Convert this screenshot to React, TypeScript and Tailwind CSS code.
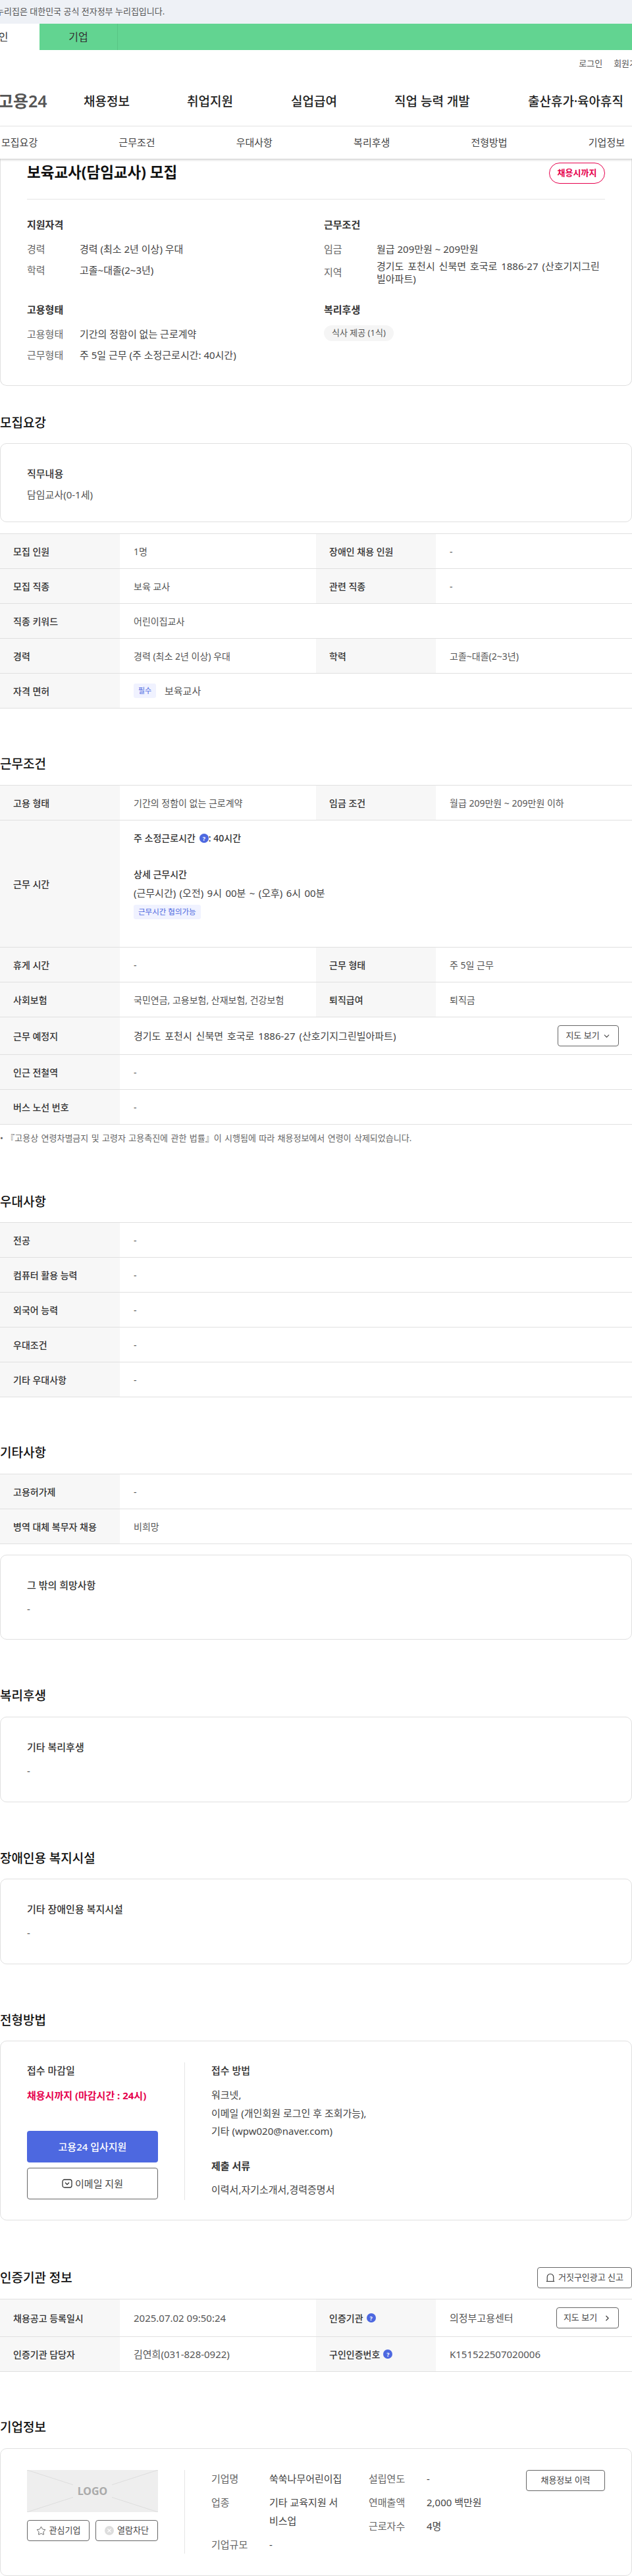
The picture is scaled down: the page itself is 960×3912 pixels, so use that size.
import React from "react";
import { ChevronDown, ChevronRight, Star } from "lucide-react";

function Help() {
  return (
    <span className="inline-flex items-center justify-center rounded-full bg-[#4d68e0] text-white font-bold text-[9px] leading-none w-[14px] h-[14px]">
      ?
    </span>
  );
}

function Heading({ children }: { children: React.ReactNode }) {
  return <h2 className="text-[19px] leading-[30px] font-medium text-[#111]">{children}</h2>;
}

function Label({ children }: { children: React.ReactNode }) {
  return (
    <div className="w-[182px] shrink-0 bg-[#f7f7f7] pl-5 pr-2 flex items-center font-medium text-[#333]">
      {children}
    </div>
  );
}

function Value({ children, wide }: { children: React.ReactNode; wide?: boolean }) {
  return (
    <div className={`${wide ? "flex-1" : "w-[298px] shrink-0"} pl-[21px] pr-2 flex items-center text-[#555]`}>
      {children}
    </div>
  );
}

function Row({ cells, size = "text-[14px]" }: { cells: [React.ReactNode, React.ReactNode][]; size?: string }) {
  return (
    <div className={`flex border-b border-[#e0e0e0] h-[53px] text-[14px]`}>
      {cells.map(([l, v], i) => (
        <React.Fragment key={i}>
          <Label>{l}</Label>
          <Value wide={cells.length === 1 || i === 1}>
            <span className={size}>{v}</span>
          </Value>
        </React.Fragment>
      ))}
    </div>
  );
}

function BoxCard({ title, value, className, gap = "mt-3" }: { title: string; value: string; className: string; gap?: string }) {
  return (
    <div className={`rounded-[10px] border border-[#e0e0e0] px-10 pt-[33px] ${className}`}>
      <p className="font-medium text-[#333] leading-[24px]">{title}</p>
      <p className={`${gap} text-[#555] leading-[24px]`}>{value}</p>
    </div>
  );
}

function OutlineBtn({ children, className }: { children: React.ReactNode; className: string }) {
  return (
    <button className={`flex items-center justify-center rounded-[4px] border border-[#666] bg-white text-[#444] ${className}`}>
      {children}
    </button>
  );
}

export default function App() {
  return (
    <div className="w-[960px] overflow-hidden bg-white font-['Noto_Sans','Noto_Sans_CJK_KR',sans-serif] text-[15px] text-[#333]">
      {/* top banner */}
      <div className="h-9 bg-[#eef1f6] flex items-center text-[13px] text-[#555]">
        <span className="-ml-[6px]">누리집은 대한민국 공식 전자정부 누리집입니다.</span>
      </div>
      <div className="h-10 bg-[#62d491] flex text-[#333] text-[16px]">
        <div className="w-[60px] bg-white flex items-center">
          <span className="-ml-[17px]">개인</span>
        </div>
        <div className="w-[119px] border-r border-[#58c585] flex items-center justify-center">기업</div>
      </div>

      {/* header */}
      <div className="h-[116px] border-b border-[#e5e5e5]">
        <div className="flex justify-end gap-[17px] pt-[10px] -mr-[20px] text-[13px] leading-5 text-[#555]">
          <span>로그인</span>
          <span>회원가입</span>
        </div>
        <div className="flex items-center mt-[28px] h-10 text-[19px] font-medium text-[#222]">
          <span className="-ml-[3px] w-[130px] text-[25px] font-semibold text-[#555]">고용24</span>
          <span className="w-[157px]">채용정보</span>
          <span className="w-[158px]">취업지원</span>
          <span className="w-[157px]">실업급여</span>
          <span className="w-[203px]">직업 능력 개발</span>
          <span>출산휴가·육아휴직</span>
        </div>
      </div>
      <div className="h-[49px] flex items-center justify-between pl-[2px] pr-[11px] relative z-10 shadow-[0_2px_3px_rgba(0,0,0,0.18)] bg-white text-[#444]">
        {["모집요강", "근무조건", "우대사항", "복리후생", "전형방법", "기업정보"].map((t) => (
          <span key={t}>{t}</span>
        ))}
      </div>

      {/* summary card */}
      <div className="h-[345px] border border-t-0 border-[#e0e0e0] rounded-b-[10px] px-10">
        <div className="h-[62px] border-b border-[#e5e5e5] flex justify-between">
          <h1 className="mt-[4px] text-[22.5px] leading-[34px] font-bold text-[#111]">보육교사(담임교사) 모집</h1>
          <span className="mt-[6px] w-[85px] h-[32px] rounded-full border border-[#e6004d] text-[#e6004d] text-[13px] font-bold flex items-center justify-center">채용시까지</span>
        </div>
        <div className="grid grid-cols-[451px_1fr] mt-[26px] text-[#444]">
          <div>
            <h3 className="font-bold leading-6 text-[#333]">지원자격</h3>
            <div className="mt-[13px] flex h-[24px] items-center"><span className="w-20 text-[#666]">경력</span><span>경력 (최소 2년 이상) 우대</span></div>
            <div className="mt-[8px] flex h-[24px] items-center"><span className="w-20 text-[#666]">학력</span><span>고졸~대졸(2~3년)</span></div>
          </div>
          <div>
            <h3 className="font-bold leading-6 text-[#333]">근무조건</h3>
            <div className="mt-[13px] flex h-[24px] items-center"><span className="w-20 text-[#666]">임금</span><span>월급 209만원 ~ 209만원</span></div>
            <div className="mt-[3px] flex items-center"><span className="w-20 shrink-0 text-[#666]">지역</span><span className="leading-[19px] pt-[2px] w-[340px] break-all [word-spacing:2px]">경기도 포천시 신북면 호국로 1886-27 (산호기지그린빌아파트)</span></div>
          </div>
          <div className="mt-[25px]">
            <h3 className="font-bold leading-6 text-[#333]">고용형태</h3>
            <div className="mt-[13px] flex h-[24px] items-center"><span className="w-20 text-[#666]">고용형태</span><span>기간의 정함이 없는 근로계약</span></div>
            <div className="mt-[8px] flex h-[24px] items-center"><span className="w-20 text-[#666]">근무형태</span><span>주 5일 근무 (주 소정근로시간: 40시간)</span></div>
          </div>
          <div className="mt-[25px]">
            <h3 className="font-bold leading-6 text-[#333]">복리후생</h3>
            <span className="mt-[12px] flex w-fit h-6 items-center px-3 rounded-full bg-[#f5f5f5] text-[13px] text-[#555]">식사 제공 (1식)</span>
          </div>
        </div>
      </div>

      {/* 모집요강 */}
      <div className="mt-[41px]"><Heading>모집요강</Heading></div>
      <BoxCard title="직무내용" value="담임교사(0-1세)" gap="mt-2" className="mt-4 h-[120px]" />
      <div className="mt-[17px] border-t border-[#e0e0e0]">
        <Row cells={[["모집 인원", "1명"], ["장애인 채용 인원", "-"]]} />
        <Row cells={[["모집 직종", "보육 교사"], ["관련 직종", "-"]]} />
        <Row cells={[["직종 키워드", "어린이집교사"]]} />
        <Row cells={[["경력", "경력 (최소 2년 이상) 우대"], ["학력", "고졸~대졸(2~3년)"]]} />
        <Row
          size="text-[15px]"
          cells={[[
            "자격 면허",
            <span className="flex items-center" key="a">
              <span className="w-[34px] h-[22px] mr-[13px] flex items-center justify-center rounded-[3px] bg-[#f0f2ff] text-[#4d68e0] text-[11px]">필수</span>
              보육교사
            </span>,
          ]]}
        />
      </div>

      {/* 근무조건 */}
      <div className="mt-[69px]"><Heading>근무조건</Heading></div>
      <div className="mt-[17px] border-t border-[#e0e0e0]">
        <Row cells={[["고용 형태", "기간의 정함이 없는 근로계약"], ["임금 조건", "월급 209만원 ~ 209만원 이하"]]} />
        <div className="flex border-b border-[#e0e0e0] h-[193px] text-[14px]">
          <Label>근무 시간</Label>
          <div className="flex-1 pl-[21px] pt-[15px] text-[#333]">
            <p className="font-medium leading-6 flex items-center gap-[6px]">주 소정근로시간 <span className="flex items-center"><Help />: 40시간</span></p>
            <p className="mt-[31px] font-medium leading-6">상세 근무시간</p>
            <p className="mt-1 leading-6 text-[15px] [word-spacing:1.5px] text-[#444]">(근무시간) (오전) 9시 00분 ~ (오후) 6시 00분</p>
            <span className="mt-[6px] flex w-fit h-[22px] items-center px-[7px] rounded-[3px] bg-[#f0f2ff] text-[#4d68e0] text-[11.5px]">근무시간 협의가능</span>
          </div>
        </div>
        <Row cells={[["휴게 시간", "-"], ["근무 형태", "주 5일 근무"]]} />
        <Row cells={[["사회보험", "국민연금, 고용보험, 산재보험, 건강보험"], ["퇴직급여", "퇴직금"]]} />
        <div className="flex border-b border-[#e0e0e0] h-[57px] text-[14px]">
          <Label>근무 예정지</Label>
          <div className="flex-1 pl-[21px] pr-5 flex items-center justify-between text-[15px] text-[#444]">
            <span className="[word-spacing:2px]">경기도 포천시 신북면 호국로 1886-27 (산호기지그린빌아파트)</span>
            <OutlineBtn className="w-[93px] h-[32px] text-[13px] gap-1">지도 보기 <ChevronDown size={13} /></OutlineBtn>
          </div>
        </div>
        <Row cells={[["인근 전철역", "-"]]} />
        <Row cells={[["버스 노선 번호", "-"]]} />
      </div>
      <p className="mt-[10px] text-[13px] leading-5 [word-spacing:1px] text-[#666]">• 『고용상 연령차별금지 및 고령자 고용촉진에 관한 법률』이 시행됨에 따라 채용정보에서 연령이 삭제되었습니다.</p>

      {/* 우대사항 */}
      <div className="mt-[72px]"><Heading>우대사항</Heading></div>
      <div className="mt-4 border-t border-[#e0e0e0]">
        <Row cells={[["전공", "-"]]} />
        <Row cells={[["컴퓨터 활용 능력", "-"]]} />
        <Row cells={[["외국어 능력", "-"]]} />
        <Row cells={[["우대조건", "-"]]} />
        <Row cells={[["기타 우대사항", "-"]]} />
      </div>

      {/* 기타사항 */}
      <div className="mt-[69px]"><Heading>기타사항</Heading></div>
      <div className="mt-[17px] border-t border-[#e0e0e0]">
        <Row cells={[["고용허가제", "-"]]} />
        <Row cells={[["병역 대체 복무자 채용", "비희망"]]} />
      </div>
      <BoxCard title="그 밖의 희망사항" value="-" className="mt-4 h-[129px]" />

      {/* 복리후생 */}
      <div className="mt-[70px]"><Heading>복리후생</Heading></div>
      <BoxCard title="기타 복리후생" value="-" className="mt-[17px] h-[130px]" />

      {/* 장애인용 복지시설 */}
      <div className="mt-[70px]"><Heading>장애인용 복지시설</Heading></div>
      <BoxCard title="기타 장애인용 복지시설" value="-" className="mt-4 h-[130px]" />

      {/* 전형방법 */}
      <div className="mt-[70px]"><Heading>전형방법</Heading></div>
      <div className="mt-4 h-[273px] rounded-[10px] border border-[#e0e0e0] px-10 pt-8 flex">
        <div className="w-[199px] shrink-0">
          <p className="font-medium leading-6">접수 마감일</p>
          <p className="mt-[14px] font-bold leading-6 text-[#e6004d] whitespace-nowrap">채용시까지 (마감시간 : 24시)</p>
          <button className="mt-[42px] block w-full h-12 rounded-[4px] bg-[#4d68e0] text-white text-[15px] font-medium">고용24 입사지원</button>
          <OutlineBtn className="mt-2 w-full h-12 gap-1 text-[15px]">
            <svg width="16" height="16" viewBox="0 0 16 16" fill="none" stroke="#333" strokeWidth="1.3">
              <rect x="1" y="2" width="14" height="12" rx="3" />
              <path d="M5 6.5 8 9.5 11 6.5" />
            </svg>
            이메일 지원
          </OutlineBtn>
        </div>
        <div className="ml-10 border-l border-[#e5e5e5] pl-10 h-[209px] flex-1">
          <p className="font-medium leading-6">접수 방법</p>
          <div className="mt-3 leading-[27.5px] text-[#444]">
            <p>워크넷,</p>
            <p>이메일 (개인회원 로그인 후 조회가능),</p>
            <p>기타 (wpw020@naver.com)</p>
          </div>
          <p className="mt-[26px] font-bold leading-6">제출 서류</p>
          <p className="mt-3 leading-6 text-[#444]">이력서,자기소개서,경력증명서</p>
        </div>
      </div>

      {/* 인증기관 정보 */}
      <div className="mt-[71px] flex items-center justify-between h-8">
        <Heading>인증기관 정보</Heading>
        <OutlineBtn className="w-[144px] h-8 text-[13px] gap-[5px]">
          <svg width="14" height="14" viewBox="0 0 14 14" fill="none" stroke="#333" strokeWidth="1.1">
            <path d="M2.2 12.5V6a4.8 4.8 0 0 1 9.6 0v6.5M.8 12.5h12.4" />
          </svg>
          거짓구인광고 신고
        </OutlineBtn>
      </div>
      <div className="mt-4 border-t border-[#e0e0e0]">
        <div className="flex border-b border-[#e0e0e0] h-[57px] text-[14px]">
          <Label>채용공고 등록일시</Label>
          <Value><span className="text-[15px]">2025.07.02 09:50:24</span></Value>
          <Label><span className="flex items-center gap-[5px]">인증기관 <Help /></span></Label>
          <div className="flex-1 pl-[21px] pr-5 flex items-center justify-between text-[15px] text-[#555]">
            <span>의정부고용센터</span>
            <OutlineBtn className="w-[95px] h-[32px] text-[13px] gap-[9px]">지도 보기 <ChevronRight size={13} strokeWidth={2.4} /></OutlineBtn>
          </div>
        </div>
        <Row size="text-[15px]" cells={[["인증기관 담당자", "김연희(031-828-0922)"], [<span className="flex items-center gap-[5px]" key="b">구인인증번호 <Help /></span>, "K151522507020006"]]} />
      </div>

      {/* 기업정보 */}
      <div className="mt-[69px]"><Heading>기업정보</Heading></div>
      <div className="mt-[17px] h-[194px] rounded-[10px] border border-[#e0e0e0] px-10 pt-8 flex">
        <div className="w-[199px] shrink-0">
          <div className="relative h-16 bg-[#eeeeee] flex items-center justify-center">
            <svg className="absolute inset-0 w-full h-full" viewBox="0 0 199 64" preserveAspectRatio="none" stroke="#dddddd" fill="none">
              <path d="M0 0 199 64M199 0 0 64" />
            </svg>
            <span className="relative bg-[#eeeeee] px-[7px] py-[3px] leading-5 text-[#aaa] text-[16px] font-bold">LOGO</span>
          </div>
          <div className="mt-3 flex gap-[9px]">
            <OutlineBtn className="w-[95px] h-8 text-[13px] gap-[5px]"><Star size={15} strokeWidth={1.3} />관심기업</OutlineBtn>
            <OutlineBtn className="w-[95px] h-8 text-[13px] gap-[5px]">
              <svg width="14" height="14" viewBox="0 0 16 16">
                <circle cx="8" cy="8" r="8" fill="#ddd" />
                <path d="M5 5 11 11M11 5 5 11" stroke="#fff" strokeWidth="1.5" />
              </svg>
              열람차단
            </OutlineBtn>
          </div>
        </div>
        <div className="ml-10 border-l border-[#e5e5e5] pl-10 h-[127px] flex-1 flex text-[#444]">
          <div className="w-[239px] leading-[27.5px]">
            <div className="flex"><span className="w-[88px] shrink-0 text-[#666]">기업명</span><span>쑥쑥나무어린이집</span></div>
            <div className="flex mt-[8.5px]"><span className="w-[88px] shrink-0 text-[#666]">업종</span><span className="w-[112px] break-all">기타 교육지원 서비스업</span></div>
            <div className="flex mt-[8.5px]"><span className="w-[88px] shrink-0 text-[#666]">기업규모</span><span>-</span></div>
          </div>
          <div className="w-[239px] leading-[27.5px]">
            <div className="flex"><span className="w-[88px] shrink-0 text-[#666]">설립연도</span><span>-</span></div>
            <div className="flex mt-[8.5px]"><span className="w-[88px] shrink-0 text-[#666]">연매출액</span><span>2,000 백만원</span></div>
            <div className="flex mt-[8.5px]"><span className="w-[88px] shrink-0 text-[#666]">근로자수</span><span>4명</span></div>
          </div>
          <OutlineBtn className="w-[120px] h-8 text-[13px]">채용정보 이력</OutlineBtn>
        </div>
      </div>
    </div>
  );
}
